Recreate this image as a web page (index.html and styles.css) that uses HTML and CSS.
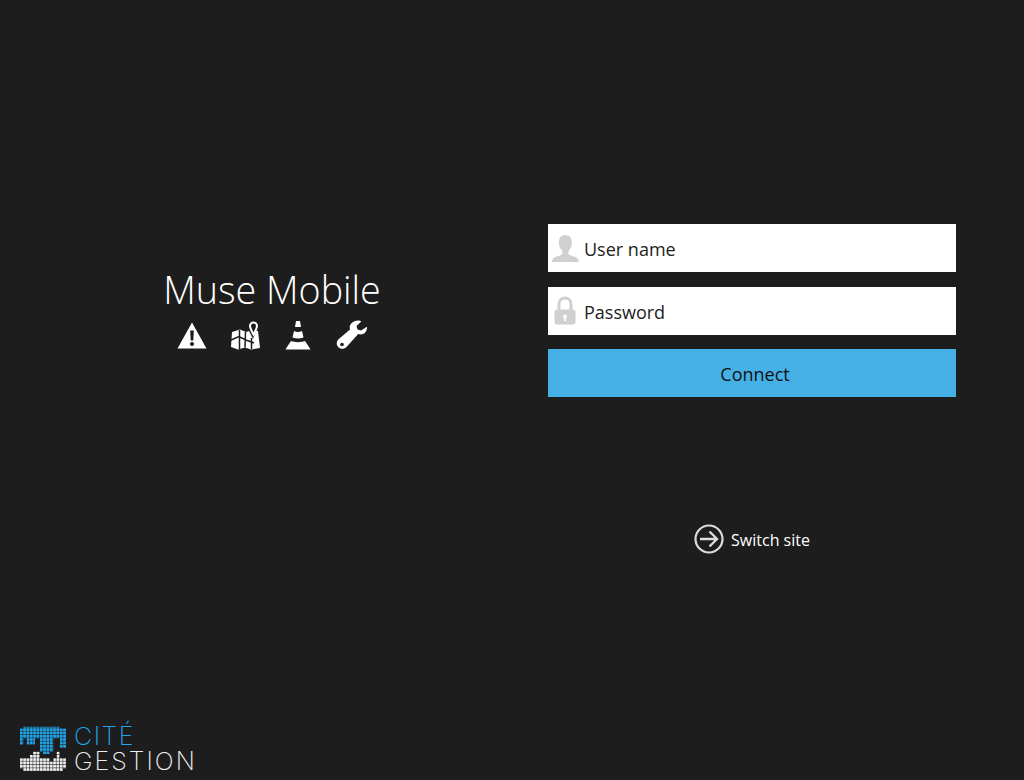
FILE: index.html
```html
<!DOCTYPE html>
<html lang="en">
<head>
	<meta charset="utf-8">
	<title>Muse Mobile</title>
	<link rel="stylesheet" href="styles.css">
</head>
<body>
	<div class="page">
		<div class="main">
			<div class="brand">
				<h1>Muse Mobile</h1>
				<div class="brand-icons">
					<svg class="icon" width="30" height="30" viewBox="0 0 30 30">
						<path fill="#fff" fill-rule="evenodd" d="M15 2.500 29.500 28.500H.5ZM13.200 10.500l.5 10h2.600l.5-10ZM15 22a2 2 0 1 0 .01 0Z"/>
					</svg>
					<svg class="icon" width="30" height="30" viewBox="0 0 30 30">
						<path fill="#fff" d="M2 12 10 9.500 16 12 19 11 23 19 26 11 28 11 30 28 21 29.500 15 27.500 8 29.500 1 27Z"/>
						<path fill="none" stroke="#1d1d1d" stroke-width="1.500" d="M9.500 10 9.500 29M15.500 12 15 27.500M21.500 18 21.500 29M1 20 9 16.500 16 20 24 23"/>
						<path fill="none" stroke="#fff" stroke-width="2" d="M23.500 14.500c-1.800-3.500-3.500-6-3.500-8.500a3.500 3.500 0 0 1 7 0c0 2.500-1.700 5-3.500 8.500Z"/>
					</svg>
					<svg class="icon" width="30" height="30" viewBox="0 0 30 30">
						<path fill="#fff" d="M13 1h4l1 6h-6ZM11 11c2.500 1.200 5.500 1.200 8 0l1.500 6.500c-3.500 1.300-7.500 1.300-11 0ZM8 21c4 1.500 10 1.500 14 0l4 6 1.500 2.500H2.500L4 27Z"/>
					</svg>
					<svg class="icon" width="32" height="30" viewBox="0 0 32 30">
						<path fill="#fff" d="M31 7c.3 4-2.500 7.500-6.500 7.500-.8 0-1.600-.1-2.300-.4L10.500 27c-2 2.200-5.500 2.500-7.800.5-2.500-2.200-2.600-6-.2-8.200L14 9.500c-.2-.7-.3-1.400-.3-2C13.700 3.500 18 .5 22 .5c1 0 2.500.2 3.500.8l-5 4.700 1 3.500 3.500 1 5.500-3.500Z"/>
						<circle cx="6" cy="24.500" r="1.800" fill="#1d1d1d"/>
					</svg>
				</div>
			</div>
			<div class="login">
				<label class="field">
					<svg class="field-icon" width="36" height="48" viewBox="0 0 36 48">
						<path fill="#d0d0d0" d="M17 11c4.500 0 7 3 7 7.500 0 3.500-1.500 6.500-3.500 8.500v3.500c3 1.500 8 2 9.500 4.500 .6 1 .8 2 .8 3H4c0-1 .2-2 .8-3 1.500-2.500 6.500-3 9.500-4.500V27c-2-2-3.500-5-3.500-8.500C10.800 14 13 11 17 11Z"/>
					</svg>
					<input type="text" placeholder="User name">
				</label>
				<label class="field">
					<svg class="field-icon" width="36" height="48" viewBox="0 0 36 48">
						<path fill="none" stroke="#d0d0d0" stroke-width="3" d="M11 24v-7c0-3.500 2.500-6 6-6s6 2.500 6 6v7"/>
						<path fill="#d0d0d0" fill-rule="evenodd" d="M9 22.500h16c1.500 0 2.500 1 2.500 2.500v10c0 1.500-1 2.500-2.500 2.500H9c-1.500 0-2.500-1-2.500-2.500V25c0-1.500 1-2.500 2.500-2.500ZM17 27.500a2 2 0 0 0-1 3.700V34h2v-2.800a2 2 0 0 0-1-3.700Z"/>
					</svg>
					<input type="password" placeholder="Password">
				</label>
				<button class="connect" type="button">Connect</button>
				<a class="switch-site" href="#">
					<svg width="30" height="30" viewBox="0 0 30 30">
						<circle cx="15" cy="15" r="13.500" fill="none" stroke="#dcdcdc" stroke-width="2.200"/>
						<path fill="none" stroke="#dcdcdc" stroke-width="2.400" d="M6 15h17M15.500 7.500 23 15l-7.500 7.500"/>
					</svg>
					<span>Switch site</span>
				</a>
			</div>
		</div>
		<div class="footer">
			<svg class="logo-mark" width="46" height="46" viewBox="0 0 46 46">
				<defs>
					<pattern id="dots-blue" width="3.330" height="3.330" patternUnits="userSpaceOnUse">
						<rect width="2.800" height="2.800" fill="#20a4ea"/>
					</pattern>
					<pattern id="dots-white" width="3.330" height="3.330" patternUnits="userSpaceOnUse">
						<rect width="2.800" height="2.800" fill="#eeeeee"/>
					</pattern>
				</defs>
				<path fill="url(#dots-blue)" d="M3.300 1.700H40V3.400H46V23H40V13.300H33.300V26.800H30V29H23V26.800H20V13.300H15V19.900H6.700V13.300H3.300V19.900H0V3.400H3.300Z"/>
				<path fill="url(#dots-white)" d="M0 33.300H10V30H13V26.700H20V33.300H30V36.600H33.300V33.300H36.600V26.700H40V33.300H46V43.200H43V46H3.300V43.200H0Z"/>
			</svg>
			<div class="logo-text">
				<span class="logo-cite">CITÉ</span>
				<span class="logo-gestion">GESTION</span>
			</div>
		</div>
	</div>
</body>
</html>
```

FILE: styles.css
```css
body {
	margin: 0;
	background-color: #1d1d1d;
	font-family: 'Open Sans', 'Noto Sans', sans-serif;
	color: #fff;
}

.page {
	height: 780px;
	display: flex;
	flex-direction: column;
	overflow: hidden;
}

.main {
	flex: 1;
	display: flex;
	padding-top: 224px;
}

.brand {
	width: 544px;
	padding-top: 38px;
	text-align: center;
}

.brand h1 {
	margin: 0;
	font-size: 37.700px;
	font-weight: 300;
	line-height: 56px;
}

.brand-icons {
	display: flex;
	justify-content: center;
	gap: 23px;
	margin-top: 2px;
}

.login {
	width: 408px;
	margin-left: 4px;
}

.field {
	display: flex;
	height: 48px;
	margin-bottom: 15px;
	background-color: #fff;
}

.field-icon {
	flex: none;
}

.field input {
	flex: 1;
	min-width: 0;
	border: 0;
	padding: 2px 0 0;
	outline: 0;
	background: transparent;
	font-family: inherit;
	font-size: 18px;
	color: #222;
}

.field input::placeholder {
	color: #222;
	opacity: 1;
}

.connect {
	display: block;
	width: 100%;
	height: 48px;
	margin-top: -1px;
	padding: 2px 0 0 6px;
	border: 0;
	background-color: #45b0e6;
	font-family: inherit;
	font-size: 18px;
	color: #111;
}

.switch-site {
	display: flex;
	align-items: center;
	justify-content: center;
	gap: 7px;
	margin-top: 127px;
	font-size: 16px;
	color: #fff;
	text-decoration: none;
}

.switch-site span {
	padding-top: 2px;
}

.footer {
	display: flex;
	gap: 8px;
	padding: 0 0 6px 20px;
}

.logo-mark {
	flex: none;
	margin-top: 1px;
}

.logo-text {
	display: flex;
	flex-direction: column;
	font-family: Inter, 'Open Sans', sans-serif;
	font-size: 25px;
	font-weight: 200;
	line-height: 25px;
}

.logo-cite {
	color: #20a4ea;
	letter-spacing: 1.500px;
}

.logo-gestion {
	color: #eeeeee;
	letter-spacing: 2px;
}
```
